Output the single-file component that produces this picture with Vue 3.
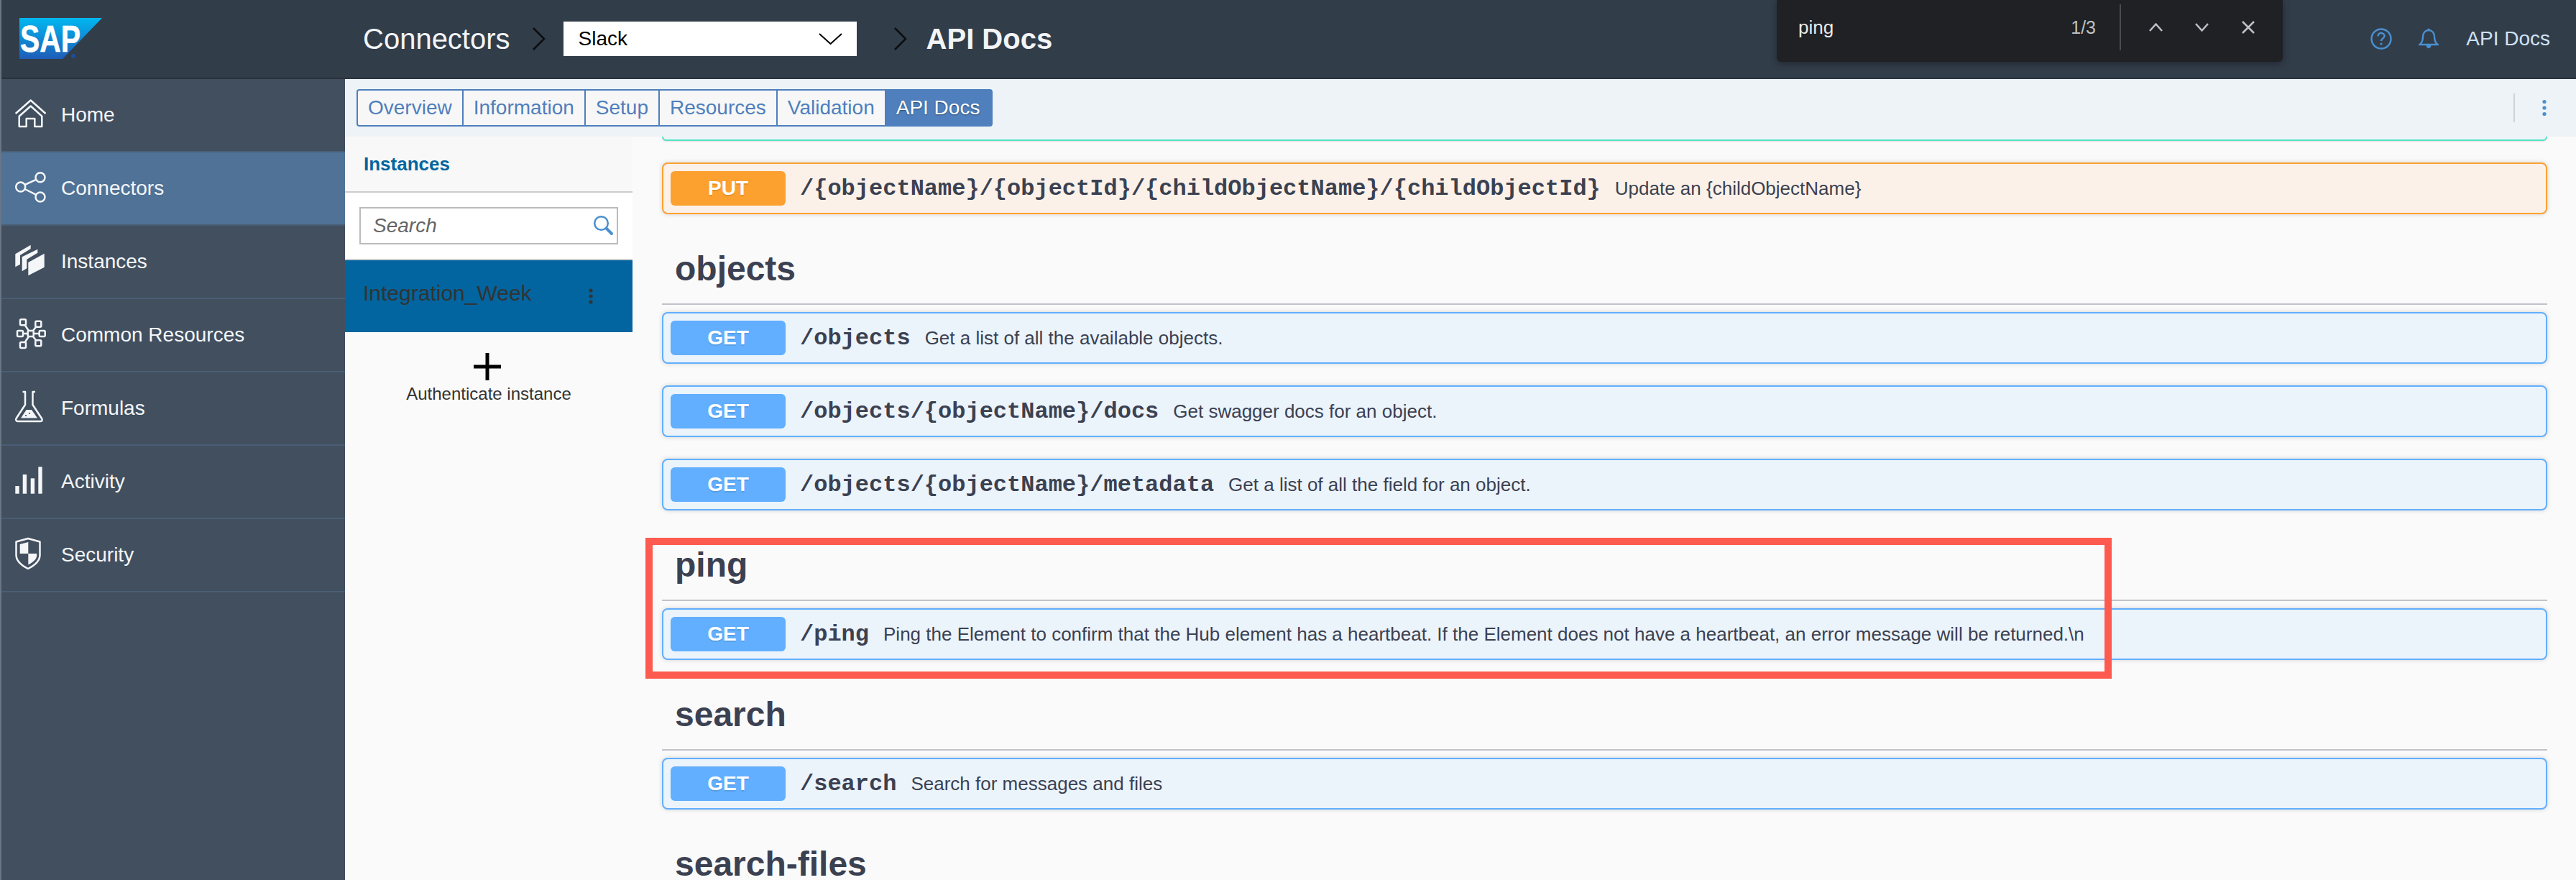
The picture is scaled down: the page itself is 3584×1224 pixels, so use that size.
<template>
  <div class="page">
    <header class="topbar">
      <div class="logo-wrap">
        <svg class="sap-logo" width="116" height="58" viewBox="0 0 116 58">
          <defs>
            <linearGradient id="sapBlue" x1="0" y1="0" x2="0" y2="1">
              <stop offset="0" stop-color="#00b8f1" />
              <stop offset="1" stop-color="#1f5cb8" />
            </linearGradient>
          </defs>
          <polygon points="0,0 115,0 60,57 0,57" fill="url(#sapBlue)" />
          <text x="1" y="47" class="sap-text" textLength="84" lengthAdjust="spacingAndGlyphs">SAP</text>
          <circle cx="75" cy="53" r="3" fill="#1d4d9a" />
        </svg>
      </div>
      <span class="crumb">Connectors</span>
      <svg class="crumb-arrow first" width="19" height="32" viewBox="0 0 19 32">
        <path d="M2 1 L17 16 L2 31" />
      </svg>
      <div class="select">
        <span>Slack</span>
        <svg width="33" height="16" viewBox="0 0 33 16"><path d="M1 1 L16.5 15 L32 1" /></svg>
      </div>
      <svg class="crumb-arrow second" width="19" height="32" viewBox="0 0 19 32">
        <path d="M2 1 L17 16 L2 31" />
      </svg>
      <span class="crumb-current">API Docs</span>
      <div class="top-right">
        <svg width="30" height="30" viewBox="0 0 30 30" class="help-icon">
          <circle cx="15" cy="15" r="13.5" />
          <path d="M10.5 11.5 C10.5 8.5 12.5 7 15 7 C17.8 7 19.5 8.8 19.5 11 C19.5 14.5 15 14.5 15 18" />
          <circle class="dot" cx="15" cy="22" r="1.6" />
        </svg>
        <svg width="28" height="30" viewBox="0 0 28 30" class="bell-icon">
          <circle class="dot" cx="14" cy="2" r="1.6" />
          <path d="M1.5 23 C5.5 20 6 16 6 12 C6 6.5 9.5 3 14 3 C18.5 3 22 6.5 22 12 C22 16 22.5 20 26.5 23 Z" />
          <path class="dot" d="M10.5 24 H17.5 C17.5 29.5 10.5 29.5 10.5 24 Z" />
        </svg>
        <span class="user">API Docs</span>
      </div>
    </header>

    <div class="body">
      <aside class="sidebar">
        <div
          v-for="item in navItems"
          :key="item.label"
          class="nav-item"
          :class="{ active: item.label === 'Connectors' }"
        >
          <svg class="nav-icon" width="44" height="44" viewBox="0 0 44 44">
            <template v-if="item.icon === 'home'">
              <path d="M0.7 20 L21.7 1.5 L42.5 20" />
              <path d="M5.7 23.7 L21.7 9.5 L37.3 23.7 V38 H27.3 V27 H15.7 V38 H5.7 Z" />
            </template>
            <template v-else-if="item.icon === 'share'">
              <circle cx="35" cy="6.7" r="6.5" />
              <circle cx="7.7" cy="20" r="6.5" />
              <circle cx="35" cy="34" r="6.5" />
              <path d="M13.5 17 L29.2 9.8 M13.5 23 L29.2 30.8" />
            </template>
            <template v-else-if="item.icon === 'stack'">
              <polygon class="fill" points="0.3,11.3 21.7,-1.3 21.7,4 7,13 7,25.7 0.3,29.3" />
              <polygon class="fill" points="9.7,15.3 31.3,4.7 31.3,9.7 16.3,18.7 16.3,31.3 9.7,35.3" />
              <polygon class="fill" points="18.3,23 40.7,10.7 40.7,29.7 18.3,41.3" />
            </template>
            <template v-else-if="item.icon === 'nodes'">
              <path d="M11 4.3 L21.7 20 L32.3 6.7 M11 36 L21.7 20 L32.3 33.3 M7 20 H37.7" />
              <rect v-for="n in nodes" :key="n[0] + '-' + n[1]" class="node" :x="n[0] - 4" :y="n[1] - 4" width="8" height="8" rx="1.5" />
            </template>
            <template v-else-if="item.icon === 'flask'">
              <path d="M10.5 -1 H14 V17 L1.5 36 C0.5 38 1.5 40 3.5 40 H35.5 C37.5 40 38.5 38 37 36 L24.5 17 V-1 H28" />
              <polygon class="fill" points="8,35.5 15.7,24 23,24 31,35.5" />
              <circle class="hole" cx="15" cy="32" r="1.1" />
              <circle class="hole" cx="20" cy="29" r="1.1" />
            </template>
            <template v-else-if="item.icon === 'bars'">
              <rect class="fill" x="0.3" y="28" width="5.4" height="10.7" />
              <rect class="fill" x="10.7" y="12" width="5.4" height="26.7" />
              <rect class="fill" x="21.7" y="17.3" width="5.4" height="21.4" />
              <rect class="fill" x="32.3" y="1.3" width="5.4" height="37.4" />
            </template>
            <template v-else>
              <path d="M18 -1 L34.5 3.5 V22 C34.5 31 26 37 18 41 C10 37 1.5 31 1.5 22 V3.5 Z" />
              <polygon class="fill" points="6.7,7 18.3,4 18.3,20 6.7,20" />
              <path class="fill" d="M18.3 20 H30.2 V23 C30 28 25 32 18.3 35.5 Z" />
            </template>
          </svg>
          <span>{{ item.label }}</span>
        </div>
      </aside>

      <div class="content">
        <div class="tabbar">
          <div class="tabs">
            <div v-for="tab in tabs" :key="tab" class="tab" :class="{ selected: tab === 'API Docs' }">{{ tab }}</div>
          </div>
          <div class="tab-actions">
            <svg width="8" height="24" viewBox="0 0 8 24">
              <circle cx="4" cy="3.5" r="2.6" />
              <circle cx="4" cy="12" r="2.6" />
              <circle cx="4" cy="20.5" r="2.6" />
            </svg>
          </div>
        </div>

        <div class="columns">
          <div class="instances">
            <div class="instances-head">Instances</div>
            <div class="instances-search">
              <div class="search-box">
                <input type="text" placeholder="Search" />
                <svg width="30" height="30" viewBox="0 0 30 30">
                  <circle cx="11.5" cy="11.5" r="9.3" />
                  <path d="M18.5 18.5 L26 26" />
                </svg>
              </div>
            </div>
            <div class="instance-row">
              <span>Integration_Week</span>
              <svg width="10" height="24" viewBox="0 0 10 24">
                <circle cx="5" cy="4" r="2.6" />
                <circle cx="5" cy="12" r="2.6" />
                <circle cx="5" cy="20" r="2.6" />
              </svg>
            </div>
            <div class="add-instance">
              <svg width="38" height="38" viewBox="0 0 38 38"><path d="M0 19 H38 M19 0 V38" /></svg>
              <span>Authenticate instance</span>
            </div>
          </div>

          <main class="docs">
            <div class="cut-card"></div>
            <div class="op put">
              <span class="method">PUT</span>
              <span class="path">/{objectName}/{objectId}/{childObjectName}/{childObjectId}</span>
              <span class="desc">Update an {childObjectName}</span>
            </div>
            <section v-for="group in groups" :key="group.name">
              <h2>{{ group.name }}</h2>
              <div class="ops">
                <div v-for="op in group.ops" :key="op.path" class="op get">
                  <span class="method">GET</span>
                  <span class="path">{{ op.path }}</span>
                  <span class="desc">{{ op.desc }}</span>
                </div>
              </div>
            </section>
          </main>
        </div>
      </div>
    </div>

    <div class="find-bar">
      <span class="find-term">ping</span>
      <span class="find-count">1/3</span>
      <span class="find-sep"></span>
      <svg width="19" height="12" viewBox="0 0 19 12"><path d="M1 11 L9.5 1.5 L18 11" /></svg>
      <svg width="19" height="12" viewBox="0 0 19 12"><path d="M1 1 L9.5 10.5 L18 1" /></svg>
      <svg width="20" height="18" viewBox="0 0 20 18"><path d="M2 1 L18 17 M18 1 L2 17" /></svg>
    </div>

    <div class="highlight"></div>
  </div>
</template>

<script setup>
const navItems = [
  { label: "Home", icon: "home" },
  { label: "Connectors", icon: "share" },
  { label: "Instances", icon: "stack" },
  { label: "Common Resources", icon: "nodes" },
  { label: "Formulas", icon: "flask" },
  { label: "Activity", icon: "bars" },
  { label: "Security", icon: "shield" },
];

// small squares of the Common Resources icon
const nodes = [
  [21.7, 20],
  [7, 20],
  [37.7, 20],
  [11, 4.3],
  [32.3, 6.7],
  [11, 36],
  [32.3, 33.3],
];

const tabs = ["Overview", "Information", "Setup", "Resources", "Validation", "API Docs"];

const groups = [
  {
    name: "objects",
    ops: [
      { path: "/objects", desc: "Get a list of all the available objects." },
      { path: "/objects/{objectName}/docs", desc: "Get swagger docs for an object." },
      { path: "/objects/{objectName}/metadata", desc: "Get a list of all the field for an object." },
    ],
  },
  {
    name: "ping",
    ops: [
      {
        path: "/ping",
        desc: "Ping the Element to confirm that the Hub element has a heartbeat. If the Element does not have a heartbeat, an error message will be returned.\\n",
      },
    ],
  },
  {
    name: "search",
    ops: [{ path: "/search", desc: "Search for messages and files" }],
  },
  { name: "search-files", ops: [] },
];
</script>

<style scoped>
.page {
  position: relative;
  width: 3584px;
  height: 1224px;
  overflow: hidden;
  box-sizing: border-box;
  border-left: 2px solid #6a7684;
  font-family: "Liberation Sans", Arial, sans-serif;
  background: #fafafa;
}

/* top bar */
.topbar {
  display: flex;
  align-items: center;
  height: 110px;
  box-sizing: border-box;
  border-bottom: 2px solid #29323c;
  background: #323d4a;
}
.logo-wrap {
  width: 478px;
  flex-shrink: 0;
  padding-left: 25px;
  box-sizing: border-box;
}
.sap-logo {
  display: block;
}
.sap-text {
  font-family: "Liberation Sans", Arial, sans-serif;
  font-weight: 700;
  font-size: 51px;
  fill: #fff;
  stroke: #fff;
  stroke-width: 0.6;
}
.crumb {
  margin-left: 25px;
  font-size: 40px;
  color: #f2f4f6;
}
.crumb-arrow {
  fill: none;
  stroke: #0b0d10;
  stroke-width: 2.5;
}
.crumb-arrow.first {
  margin: 0 25px 0 30px;
}
.crumb-arrow.second {
  margin: 0 27px 0 51px;
}
.select {
  display: flex;
  align-items: center;
  justify-content: space-between;
  width: 408px;
  height: 48px;
  box-sizing: border-box;
  padding: 0 20px 0 21px;
  background: #fff;
  font-size: 28px;
  color: #000;
}
.select svg {
  fill: none;
  stroke: #000;
  stroke-width: 2;
}
.crumb-current {
  font-size: 40px;
  font-weight: 700;
  color: #f2f4f6;
}
.top-right {
  display: flex;
  align-items: center;
  margin-left: auto;
  padding-right: 36px;
}
.help-icon,
.bell-icon {
  fill: none;
  stroke: #4a90d0;
  stroke-width: 2.4;
}
.bell-icon {
  margin-left: 37px;
}
.help-icon .dot,
.bell-icon .dot {
  fill: #4a90d0;
  stroke: none;
}
.user {
  margin-left: 38px;
  font-size: 28px;
  color: #cfe2f5;
}

/* find in page */
.find-bar {
  position: absolute;
  top: 0;
  left: 2470px;
  display: flex;
  align-items: center;
  width: 704px;
  height: 76px;
  padding-bottom: 10px;
  box-sizing: content-box;
  border-radius: 0 0 6px 6px;
  background: #202124;
  box-shadow: 0 3px 10px rgba(0, 0, 0, 0.35);
  color: #e8eaed;
}
.find-term {
  margin-left: 30px;
  font-size: 26px;
}
.find-count {
  margin-left: auto;
  font-size: 25px;
  color: #bdc1c6;
}
.find-sep {
  width: 2px;
  height: 64px;
  margin: 0 39px 0 33px;
  background: #4a4c50;
}
.find-bar svg {
  fill: none;
  stroke: #bdc1c6;
  stroke-width: 2.5;
  margin-right: 45px;
}
.find-bar svg:last-child {
  margin-right: 38px;
}

.body {
  display: flex;
  height: 1114px;
}

/* side menu */
.sidebar {
  width: 478px;
  flex-shrink: 0;
  background: #414f5f;
}
.nav-item {
  display: flex;
  align-items: center;
  height: 102px;
  box-sizing: border-box;
  padding-left: 19px;
  border-bottom: 2px solid #4a5e75;
  font-size: 28px;
  color: #f4f6f8;
}
.nav-item.active {
  background: #4f7296;
}
.nav-icon {
  flex-shrink: 0;
  margin-right: 20px;
  overflow: visible;
  fill: none;
  stroke: #f4f6f8;
  stroke-width: 2.5;
  stroke-linejoin: round;
}
.nav-icon .fill {
  fill: #f4f6f8;
  stroke: none;
}
.nav-icon .node {
  fill: #414f5f;
}
.nav-icon .hole {
  fill: #414f5f;
  stroke: none;
}

.content {
  flex: 1;
  min-width: 0;
  display: flex;
  flex-direction: column;
}

/* tabs */
.tabbar {
  display: flex;
  justify-content: space-between;
  height: 80px;
  flex-shrink: 0;
  box-sizing: border-box;
  padding: 14px 0 0 16px;
  background: #edf3f7;
}
.tabs {
  display: flex;
  align-self: flex-start;
  height: 52px;
  box-sizing: border-box;
  border: 2px solid #4f7fbc;
  border-radius: 4px;
  background: #f7f7f7;
}
.tab {
  display: flex;
  align-items: center;
  padding: 0 14px;
  border-right: 2px solid #4f7fbc;
  font-size: 28px;
  color: #4f7fbc;
}
.tab:last-child {
  padding-right: 16px;
  border-right: none;
}
.tab.selected {
  background: #4f7fbc;
  color: #fff;
  text-shadow: 0 1px 2px rgba(0, 0, 0, 0.4);
}
.tab-actions {
  display: flex;
  align-items: center;
  justify-content: flex-end;
  align-self: flex-start;
  width: 87px;
  height: 40px;
  margin-top: 6px;
  padding-right: 40px;
  box-sizing: border-box;
  border-left: 2px solid #cdd3d8;
}
.tab-actions svg {
  fill: #4a90d0;
}

.columns {
  display: flex;
  flex: 1;
  min-height: 0;
}

/* instances column */
.instances {
  width: 400px;
  flex-shrink: 0;
  background: #fafafa;
}
.instances-head {
  display: flex;
  align-items: center;
  height: 78px;
  box-sizing: border-box;
  padding-left: 26px;
  border-bottom: 2px solid #ccc;
  background: #f8f8f8;
  font-size: 26px;
  font-weight: 700;
  color: #00659f;
}
.instances-search {
  padding: 20px;
  border-bottom: 2px solid #ccc;
  background: #fff;
}
.search-box {
  display: flex;
  align-items: center;
  height: 52px;
  box-sizing: border-box;
  padding: 0 3px 0 17px;
  border: 2px solid #bbb;
  background: #fff;
}
.search-box input {
  flex: 1;
  min-width: 0;
  padding: 0;
  border: none;
  outline: none;
  background: transparent;
  font-family: inherit;
  font-size: 28px;
  font-style: italic;
}
.search-box input::placeholder {
  color: #666;
  opacity: 1;
}
.search-box svg {
  fill: none;
  stroke: #4a90d0;
  stroke-width: 2.5;
}
.search-box svg path {
  stroke-width: 4;
  stroke-linecap: round;
}
.instance-row {
  display: flex;
  align-items: center;
  justify-content: space-between;
  height: 100px;
  box-sizing: border-box;
  padding: 0 53px 0 25px;
  background: #02659f;
  font-size: 30px;
  color: #333;
}
.instance-row span {
  margin-bottom: 8px;
}
.instance-row svg {
  fill: #333;
}
.add-instance {
  display: flex;
  flex-direction: column;
  align-items: center;
  padding-top: 29px;
  font-size: 24px;
  color: #333;
}
.add-instance svg {
  margin-left: -4px;
  margin-bottom: 5px;
  stroke: #000;
  stroke-width: 5;
}

/* api docs column */
.docs {
  flex: 1;
  min-width: 0;
  padding: 0 40px 0 41px;
  background: #fafafa;
  color: #3b4151;
}
.cut-card {
  height: 6px;
  box-sizing: border-box;
  margin-bottom: 30px;
  border: 2px solid #50e3c2;
  border-top: none;
  border-radius: 0 0 8px 8px;
  box-shadow: 0 1px 2px rgba(0, 0, 0, 0.12);
  background: #eef4f8;
}
.docs h2 {
  height: 126px;
  box-sizing: border-box;
  margin: 0 0 10px;
  padding: 46px 0 0 18px;
  border-bottom: 2px solid #c2c2ca;
  font-size: 48px;
  line-height: 60px;
  font-weight: 700;
}
.ops {
  display: flex;
  flex-direction: column;
  gap: 30px;
}
.op {
  display: flex;
  align-items: center;
  height: 72px;
  box-sizing: border-box;
  padding: 0 10px;
  border: 2px solid;
  border-radius: 8px;
  box-shadow: 0 0 6px rgba(0, 0, 0, 0.16);
}
.op.get {
  border-color: #61affe;
  background: #ebf3fb;
}
.op.put {
  border-color: #fca130;
  background: #fbf1e8;
}
.method {
  width: 160px;
  height: 48px;
  flex-shrink: 0;
  border-radius: 6px;
  font-size: 28px;
  line-height: 48px;
  font-weight: 700;
  text-align: center;
  color: #fff;
  text-shadow: 0 2px 0 rgba(0, 0, 0, 0.1);
}
.get .method {
  background: #61affe;
}
.put .method {
  background: #fca130;
}
.path {
  padding: 0 20px;
  font-family: "Liberation Mono", "Courier New", monospace;
  font-size: 32px;
  font-weight: 700;
  white-space: nowrap;
}
.desc {
  font-size: 26px;
  white-space: nowrap;
}

/* annotation drawn over the screenshot */
.highlight {
  position: absolute;
  top: 748px;
  left: 896px;
  width: 2040px;
  height: 196px;
  box-sizing: border-box;
  border: 10px solid #ff5a4f;
  pointer-events: none;
}
</style>
